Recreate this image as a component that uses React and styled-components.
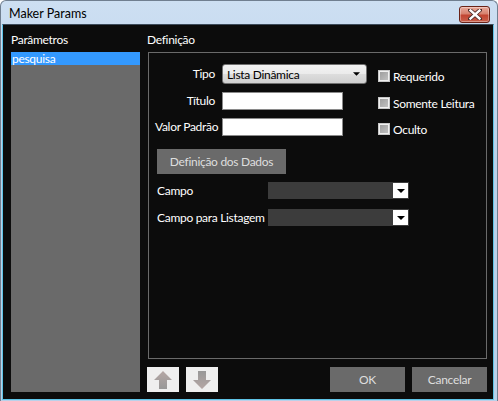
import React from "react";
import styled, { createGlobalStyle } from "styled-components";

const GlobalStyle = createGlobalStyle`
  html, body {
    margin: 0;
    padding: 0;
    background: #ffffff;
  }
  * {
    box-sizing: border-box;
  }
`;

const FONT = `Lato, "Noto Sans", sans-serif`;

const Window = styled.div`
  width: 498px;
  height: 401px;
  display: flex;
  flex-direction: column;
  border: 1px solid #707f90;
  border-bottom: none;
  border-radius: 6px 6px 0 0;
  background: linear-gradient(180deg, #cddff2 0%, #b9d1ea 40%, #b9d1ea 100%);
  padding: 0 3px 1px 1px;
  font-family: ${FONT};
  font-size: 12px;
  letter-spacing: -0.3px;
`;

const TitleBar = styled.div`
  height: 23px;
  display: flex;
  align-items: center;
  justify-content: space-between;
  padding: 0 4px 0 7px;
`;

const Title = styled.div`
  color: #000;
  font-size: 12.5px;
  letter-spacing: 0;
  padding-top: 2px;
`;

const CloseButton = styled.div`
  width: 31px;
  height: 17px;
  margin-top: 3px;
  border: 1px solid #6a2318;
  border-radius: 3px;
  background: linear-gradient(180deg, #e9a99b 0%, #d7826f 45%, #c24532 55%, #c9604b 100%);
  box-shadow: inset 0 0 0 1px rgba(255, 255, 255, 0.35);
  display: flex;
  align-items: center;
  justify-content: center;
`;

const Content = styled.div`
  flex: 1;
  display: flex;
  gap: 7px;
  background: #0c0c0c;
  border: 1px solid #5fc4e6;
  border-top-color: #3d4b5a;
  padding: 7px 6px 7px 8px;
  color: #ffffff;
`;

const LeftColumn = styled.div`
  width: 129px;
  display: flex;
  flex-direction: column;
`;

const RightColumn = styled.div`
  flex: 1;
  display: flex;
  flex-direction: column;
`;

const SectionLabel = styled.div`
  height: 16px;
  line-height: 16px;
  margin-bottom: 4px;
  white-space: nowrap;
`;

const List = styled.div`
  flex: 1;
  background: #6a6a6a;
`;

const ListItem = styled.div`
  height: 13px;
  line-height: 13px;
  padding-left: 1px;
  background: ${(p) => (p.$selected ? "#3399ff" : "transparent")};
  color: #ffffff;
  white-space: nowrap;
`;

const GroupBox = styled.div`
  flex: 1;
  border: 1px solid #6a6a6a;
  padding: 11px 0 0 6px;
  display: flex;
  flex-direction: column;
  margin-left: 1px;
`;

const TopArea = styled.div`
  display: flex;
`;

const FieldGrid = styled.div`
  display: grid;
  grid-template-columns: 60px auto;
  column-gap: 7px;
  row-gap: 8px;
  align-items: center;
  align-content: start;
`;

const FieldLabel = styled.div`
  text-align: right;
  white-space: nowrap;
  line-height: 16px;
`;

const SelectBox = styled.div`
  width: 145px;
  height: 20px;
  border: 1px solid #707070;
  border-radius: 3px;
  background: linear-gradient(180deg, #f3f3f3 0%, #ebebeb 50%, #dddddd 51%, #d0d0d0 100%);
  color: #000;
  display: flex;
  align-items: center;
  justify-content: space-between;
  padding: 0 6px 0 4px;
`;

const TextInput = styled.div`
  width: 121px;
  height: 18px;
  background: #ffffff;
  border: 1px solid #8a8a8a;
`;

const CheckColumn = styled.div`
  margin-left: 11px;
  padding-top: 4px;
  display: flex;
  flex-direction: column;
  gap: 11px;
`;

const CheckRow = styled.div`
  display: flex;
  align-items: center;
  gap: 3px;
  height: 16px;
  white-space: nowrap;
  margin-top: ${(p) => p.$shift || 0}px;
`;

const CheckBox = styled.div`
  width: 12px;
  height: 12px;
  border: 1px solid #c8c8c8;
  background: linear-gradient(135deg, #9a9a9a 0%, #c4c4c4 100%);
  box-shadow: inset 0 0 0 1px #f0f0f0;
`;

const GrayButton = styled.div`
  width: ${(p) => p.$width}px;
  height: 25px;
  background: #6a6a6a;
  color: #dedede;
  display: flex;
  align-items: center;
  justify-content: center;
  white-space: nowrap;
`;

const DataButtonWrap = styled.div`
  margin: 12px 0 0 2px;
`;

const ComboArea = styled.div`
  margin: 8px 0 0 2px;
  display: grid;
  grid-template-columns: 111px 141px;
  row-gap: 10px;
  align-items: center;
`;

const ComboLabel = styled.div`
  white-space: nowrap;
  line-height: 16px;
`;

const Combo = styled.div`
  height: 17px;
  background: #3c3c3c;
  display: flex;
  justify-content: flex-end;
  padding: 1px;
`;

const ComboArrow = styled.div`
  width: 15px;
  height: 15px;
  background: #ffffff;
  display: flex;
  align-items: center;
  justify-content: center;
`;

const BottomBar = styled.div`
  margin-top: 8px;
  height: 25px;
  display: flex;
  align-items: center;
  gap: 7px;
`;

const ArrowButton = styled.div`
  width: 32px;
  height: 25px;
  background: #efefef;
  display: flex;
  align-items: center;
  justify-content: center;
`;

const Spacer = styled.div`
  flex: 1;
`;

const Triangle = ({ size = 7 }) => (
  <svg width={size} height={Math.ceil(size / 2)} viewBox="0 0 8 4">
    <path d="M0 0 H8 L4 4 Z" fill="#000" />
  </svg>
);

const BigArrow = ({ down }) => (
  <svg width="20" height="20" viewBox="0 0 20 20">
    <defs>
      <linearGradient id={down ? "ad" : "au"} x1="0" y1="0" x2="0" y2="1">
        <stop offset="0" stopColor="#b5a7a5" />
        <stop offset="1" stopColor="#989898" />
      </linearGradient>
    </defs>
    <path
      d="M10 1 L19 10 H14 V19 H6 V10 H1 Z"
      fill={`url(#${down ? "ad" : "au"})`}
      transform={down ? "rotate(180 10 10)" : undefined}
    />
  </svg>
);

const CloseIcon = () => (
  <svg width="14" height="11" viewBox="0 0 14 11">
    <path
      d="M2 1 L12 10 M12 1 L2 10"
      stroke="#4a2a26"
      strokeWidth="4"
      strokeLinecap="square"
      fill="none"
    />
    <path
      d="M2.5 1.5 L11.5 9.5 M11.5 1.5 L2.5 9.5"
      stroke="#ffffff"
      strokeWidth="2.4"
      strokeLinecap="square"
      fill="none"
    />
  </svg>
);

export default function App() {
  return (
    <>
      <GlobalStyle />
      <Window>
        <TitleBar>
          <Title>Maker Params</Title>
          <CloseButton>
            <CloseIcon />
          </CloseButton>
        </TitleBar>
        <Content>
          <LeftColumn>
            <SectionLabel>Parâmetros</SectionLabel>
            <List>
              <ListItem $selected>pesquisa</ListItem>
            </List>
          </LeftColumn>
          <RightColumn>
            <SectionLabel>Definição</SectionLabel>
            <GroupBox>
              <TopArea>
                <FieldGrid>
                  <FieldLabel>Tipo</FieldLabel>
                  <SelectBox>
                    <span>Lista Dinâmica</span>
                    <Triangle />
                  </SelectBox>
                  <FieldLabel>Título</FieldLabel>
                  <TextInput />
                  <FieldLabel>Valor Padrão</FieldLabel>
                  <TextInput />
                </FieldGrid>
                <CheckColumn>
                  <CheckRow>
                    <CheckBox />
                    Requerido
                  </CheckRow>
                  <CheckRow>
                    <CheckBox />
                    Somente Leitura
                  </CheckRow>
                  <CheckRow $shift={-1}>
                    <CheckBox />
                    Oculto
                  </CheckRow>
                </CheckColumn>
              </TopArea>
              <DataButtonWrap>
                <GrayButton $width={129}>Definição dos Dados</GrayButton>
              </DataButtonWrap>
              <ComboArea>
                <ComboLabel>Campo</ComboLabel>
                <Combo>
                  <ComboArrow>
                    <Triangle size={8} />
                  </ComboArrow>
                </Combo>
                <ComboLabel>Campo para Listagem</ComboLabel>
                <Combo>
                  <ComboArrow>
                    <Triangle size={8} />
                  </ComboArrow>
                </Combo>
              </ComboArea>
            </GroupBox>
            <BottomBar>
              <ArrowButton>
                <BigArrow />
              </ArrowButton>
              <ArrowButton>
                <BigArrow down />
              </ArrowButton>
              <Spacer />
              <GrayButton $width={75}>OK</GrayButton>
              <GrayButton $width={75}>Cancelar</GrayButton>
            </BottomBar>
          </RightColumn>
        </Content>
      </Window>
    </>
  );
}
